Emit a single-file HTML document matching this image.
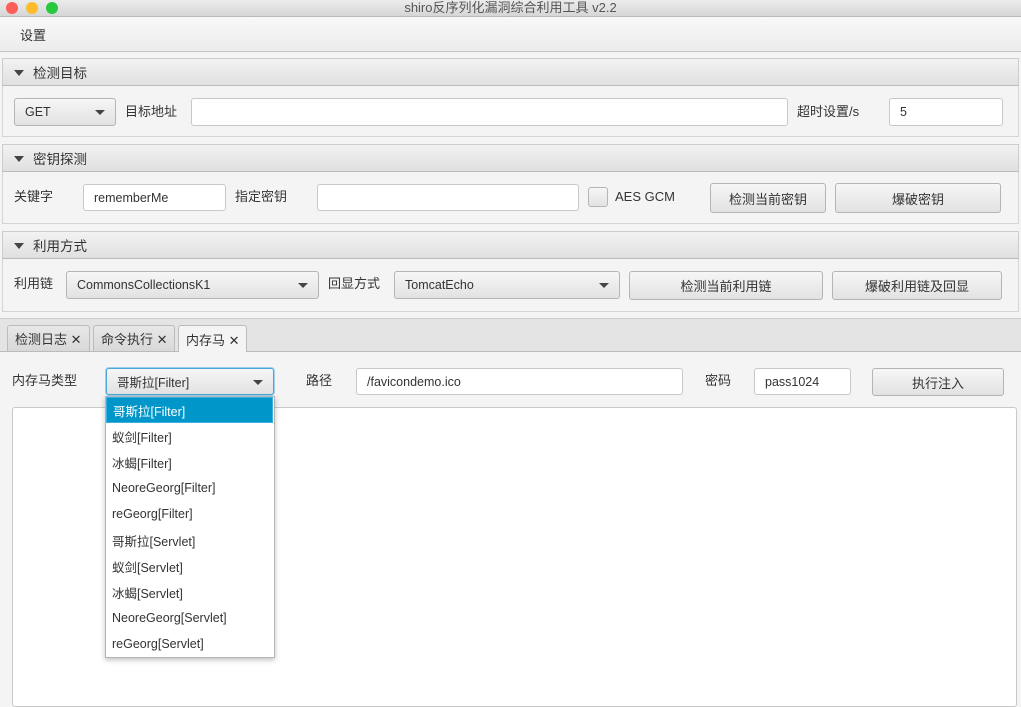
<!DOCTYPE html>
<html><head><meta charset="utf-8"><style>
*{box-sizing:border-box;margin:0;padding:0}
body{width:1021px;height:696px;overflow:hidden;background:#f4f4f4;font-family:"Liberation Sans","Noto Sans CJK SC",sans-serif;font-size:13px;color:#333;position:relative}
.a{position:absolute}
.t{position:absolute;white-space:nowrap;line-height:16px}
.inp{position:absolute;background:#fff;border:1px solid #c8c8c8;border-radius:3px;padding-left:10px;display:flex;align-items:center;font-size:12.5px;color:#333}
.btn{position:absolute;background:linear-gradient(#f6f6f6,#e2e2e2);border:1px solid #b5b5b5;border-radius:3px;display:flex;align-items:center;justify-content:center;font-size:13px;color:#333}
.cb{position:absolute;background:linear-gradient(#f6f6f6,#e2e2e2);border:1px solid #b5b5b5;border-radius:3px;padding-left:10px;display:flex;align-items:center;font-size:12.5px}
.cb:after{content:"";position:absolute;right:10px;top:50%;margin-top:-2px;border-left:5px solid transparent;border-right:5px solid transparent;border-top:5px solid #444}
.hdr{position:absolute;left:2px;right:2px;height:28px;background:linear-gradient(#f2f2f2,#e0e0e0);border:1px solid #ccc;border-bottom-color:#bbb;padding-left:30px;display:flex;align-items:center;font-size:13.5px}
.hdr:before{content:"";position:absolute;left:11px;top:11px;border-left:5px solid transparent;border-right:5px solid transparent;border-top:6px solid #444}
.pane{position:absolute;left:2px;right:2px;border:1px solid #d4d4d4;border-top:none;background:#f4f4f4}
.tab{position:absolute;top:325px;height:26px;border:1px solid #bbb;border-bottom:none;border-radius:3px 3px 0 0;background:linear-gradient(#e8e8e8,#d8d8d8);padding-left:7px;display:flex;align-items:center;font-size:13px}
.it{position:absolute;left:106px;width:167px;height:26px;padding-left:6px;display:flex;align-items:center;font-size:12.5px}
</style></head><body>
<div class="a" style="left:0;top:0;width:1021px;height:17px;background:linear-gradient(#ececec,#d6d6d6);border-bottom:1px solid #b8b8b8"></div>
<div class="a" style="left:6px;top:2px;width:12px;height:12px;border-radius:50%;background:#fc5f57"></div>
<div class="a" style="left:26px;top:2px;width:12px;height:12px;border-radius:50%;background:#fdbc2e"></div>
<div class="a" style="left:46px;top:2px;width:12px;height:12px;border-radius:50%;background:#29c840"></div>
<div class="t" style="left:0;width:1021px;text-align:center;top:0px;font-size:13px;color:#555">shiro反序列化漏洞综合利用工具 v2.2</div>
<div class="a" style="left:0;top:17px;width:1021px;height:35px;background:linear-gradient(#f8f8f8,#ececec);border-bottom:1px solid #c4c4c4"></div>
<div class="t" style="left:20px;top:28px">设置</div>

<div class="hdr" style="top:58px">检测目标</div>
<div class="pane" style="top:86px;height:51px"></div>
<div class="cb" style="left:14px;top:98px;width:102px;height:28px">GET</div>
<div class="t" style="left:125px;top:104px">目标地址</div>
<div class="inp" style="left:191px;top:98px;width:597px;height:28px"></div>
<div class="t" style="left:797px;top:104px">超时设置/s</div>
<div class="inp" style="left:889px;top:98px;width:114px;height:28px">5</div>

<div class="hdr" style="top:144px">密钥探测</div>
<div class="pane" style="top:172px;height:52px"></div>
<div class="t" style="left:14px;top:189px">关键字</div>
<div class="inp" style="left:83px;top:184px;width:143px;height:27px">rememberMe</div>
<div class="t" style="left:235px;top:189px">指定密钥</div>
<div class="inp" style="left:317px;top:184px;width:262px;height:27px"></div>
<div class="a" style="left:588px;top:187px;width:20px;height:20px;border:1px solid #b5b5b5;border-radius:3px;background:linear-gradient(#f6f6f6,#e2e2e2)"></div>
<div class="t" style="left:615px;top:189px">AES GCM</div>
<div class="btn" style="left:710px;top:183px;width:116px;height:30px">检测当前密钥</div>
<div class="btn" style="left:835px;top:183px;width:166px;height:30px">爆破密钥</div>

<div class="hdr" style="top:231px">利用方式</div>
<div class="pane" style="top:259px;height:53px"></div>
<div class="t" style="left:14px;top:276px">利用链</div>
<div class="cb" style="left:66px;top:271px;width:253px;height:28px">CommonsCollectionsK1</div>
<div class="t" style="left:328px;top:276px">回显方式</div>
<div class="cb" style="left:394px;top:271px;width:226px;height:28px">TomcatEcho</div>
<div class="btn" style="left:629px;top:271px;width:194px;height:29px">检测当前利用链</div>
<div class="btn" style="left:832px;top:271px;width:170px;height:29px">爆破利用链及回显</div>

<div class="a" style="left:0;top:318px;width:1021px;height:34px;background:#e4e4e4;border-top:1px solid #ccc;border-bottom:1px solid #bbb"></div>
<div class="tab" style="left:7px;width:83px">检测日志 ✕</div>
<div class="tab" style="left:93px;width:82px">命令执行 ✕</div>
<div class="tab" style="left:178px;width:69px;background:#f4f4f4;height:27px">内存马 ✕</div>

<div class="t" style="left:12px;top:373px">内存马类型</div>
<div class="cb" style="left:106px;top:368px;width:168px;height:27px;border:1px solid #4aa6d8;box-shadow:0 0 0 1px #9fd0ee">哥斯拉[Filter]</div>
<div class="t" style="left:306px;top:373px">路径</div>
<div class="inp" style="left:356px;top:368px;width:327px;height:27px">/favicondemo.ico</div>
<div class="t" style="left:705px;top:373px">密码</div>
<div class="inp" style="left:754px;top:368px;width:97px;height:27px">pass1024</div>
<div class="btn" style="left:872px;top:368px;width:132px;height:28px">执行注入</div>
<div class="a" style="left:12px;top:407px;width:1005px;height:300px;background:#fff;border:1px solid #c8c8c8;border-radius:3px"></div>

<div class="a" style="left:105px;top:396px;width:170px;height:262px;background:#fff;border:1px solid #b5b5b5;box-shadow:0 2px 5px rgba(0,0,0,.25)"></div>
<div class="it" style="top:397px;background:#0096c9;color:#fff;border:1px solid #3ab0e0">哥斯拉[Filter]</div>
<div class="it" style="top:423px">蚁剑[Filter]</div>
<div class="it" style="top:449px">冰蝎[Filter]</div>
<div class="it" style="top:475px">NeoreGeorg[Filter]</div>
<div class="it" style="top:501px">reGeorg[Filter]</div>
<div class="it" style="top:527px">哥斯拉[Servlet]</div>
<div class="it" style="top:553px">蚁剑[Servlet]</div>
<div class="it" style="top:579px">冰蝎[Servlet]</div>
<div class="it" style="top:605px">NeoreGeorg[Servlet]</div>
<div class="it" style="top:631px">reGeorg[Servlet]</div>
</body></html>
